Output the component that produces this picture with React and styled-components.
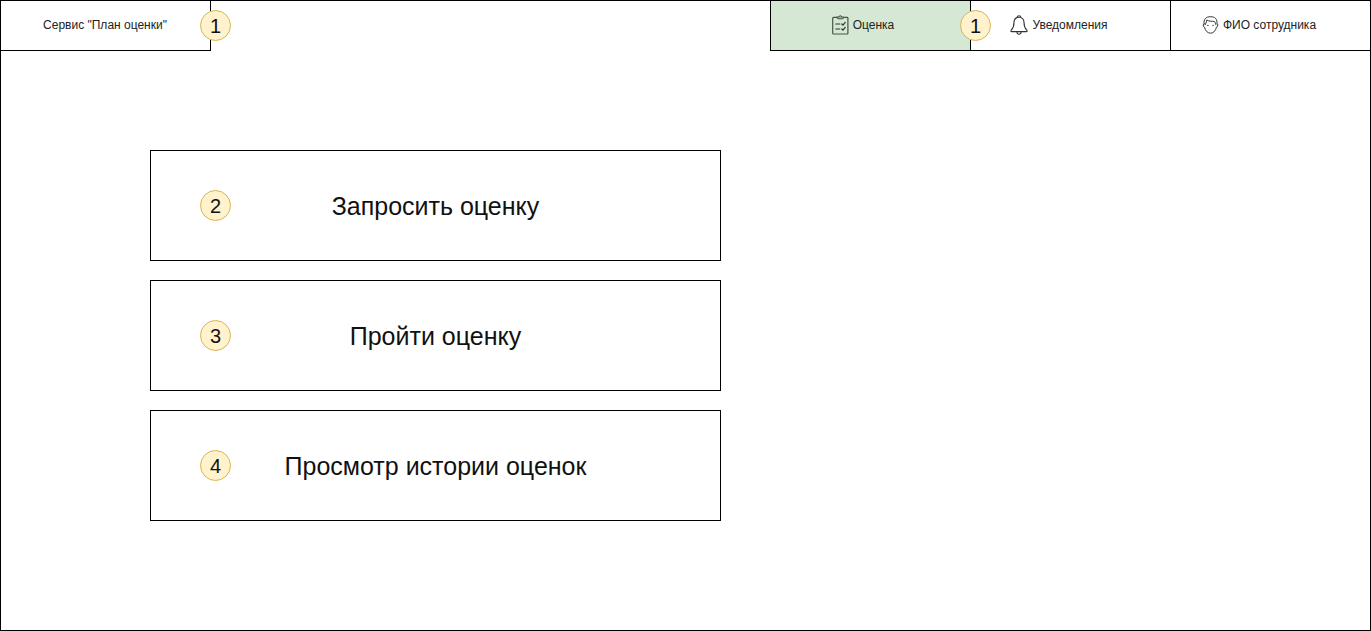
import React from "react";
import styled, { createGlobalStyle } from "styled-components";

const GlobalStyle = createGlobalStyle`
  *, *::before, *::after { box-sizing: border-box; }
  body {
    margin: 0;
    background: #ffffff;
    color: #111111;
    font-family: "Liberation Sans", Arial, Helvetica, sans-serif;
    font-size: 12px;
    line-height: 16px;
  }
`;

const Page = styled.div`
  min-height: 100vh;
  border: 1px solid #000000;
`;

const Header = styled.header`
  display: flex;
  justify-content: space-between;
`;

const Cell = styled.div`
  position: relative;
  display: flex;
  height: 50px;
  border-bottom: 1px solid #000000;
`;

const BrandCell = styled(Cell)`
  width: 210px;
  border-right: 1px solid #000000;
`;

const TabCell = styled(Cell)`
  width: 200px;
  border-left: 1px solid #000000;
  background: ${(p) => (p.$active ? "#d5e8d4" : "#ffffff")};
`;

const CellLink = styled.a`
  flex: 1;
  display: flex;
  align-items: center;
  justify-content: center;
  gap: 4px;
  padding-right: ${(p) => p.$inset}px;
  padding-bottom: 2px;
  color: #222222;
  text-decoration: none;
  white-space: nowrap;
`;

const Nav = styled.nav`
  display: flex;
`;

const Badge = styled.span`
  display: flex;
  align-items: center;
  justify-content: center;
  flex: none;
  width: 31px;
  height: 31px;
  border: 1px solid #d6b656;
  border-radius: 50%;
  background: #fff2cc;
  font-size: 20px;
  line-height: 24px;
`;

const EdgeBadge = styled(Badge)`
  position: absolute;
  z-index: 1;
  top: 9px;
  right: -21px;
`;

const Main = styled.main`
  padding: 99px 149px;
`;

const CardList = styled.div`
  display: flex;
  flex-direction: column;
  gap: 19px;
  max-width: 571px;
`;

const Card = styled.button`
  display: grid;
  grid-template-columns: 31px 1fr 31px;
  align-items: center;
  width: 100%;
  padding: 39px 49px;
  border: 1px solid #000000;
  background: #ffffff;
  color: inherit;
  font-family: inherit;
  cursor: pointer;
`;

const CardLabel = styled.span`
  font-size: 25px;
  line-height: 30px;
  text-align: center;
`;

const Icon = styled.svg`
  flex: none;
  display: block;
  fill: none;
  stroke: #333333;
  stroke-linecap: round;
  stroke-linejoin: round;
`;

const ClipboardIcon = () => (
  <Icon width="17" height="20" viewBox="0 0 17 20" aria-hidden="true">
    <path strokeWidth="1.2" stroke="#4a524a" d="M5 2.4H1.5Q.7 2.4 .7 3.2V18.2Q.7 19 1.5 19H15.1Q15.9 19 15.9 18.2V3.2Q15.9 2.4 15.1 2.4H11.6" />
    <path fill="#a3afa2" stroke="#4a524a" d="M5 2H6.9Q7 .7 8.3 .7T9.7 2H11.6V2.6Q11.6 3.8 10.4 3.8H6.2Q5 3.8 5 2.6Z" />
    <path strokeWidth="1.2" d="M3.8 9H7.8M3.8 14H7.8M9.8 9L11 10.2L13.2 7.4M9.8 14L11 15.2L13.2 12.4" />
  </Icon>
);

const BellIcon = () => (
  <Icon width="18" height="20" viewBox="0 0 18 20" aria-hidden="true">
    <path strokeWidth="1.1" d="M7.3 2.5V2Q7.3 .7 9 .7T10.7 2V2.5" />
    <path strokeWidth="1.1" d="M9 2.3C5.6 2.3 4 4.6 4 7.6C4 11.6 3 13.4 1.2 15.2Q.3 16.6 1.7 16.6H16.3Q17.7 16.6 16.8 15.2C15 13.4 14 11.6 14 7.6C14 4.6 12.4 2.3 9 2.3Z" />
    <path strokeWidth="1.1" d="M6.8 16.8Q7 19.3 9 19.3T11.2 16.8" />
  </Icon>
);

const FaceIcon = () => (
  <Icon width="17" height="18" viewBox="0 0 17 18" aria-hidden="true">
    <path d="M2.1 7.8C1.4 3.3 3.9 .7 8.5 .7S15.6 3.3 14.9 7.8C16.2 7.6 16.2 10.8 14.4 11.3C13.8 14.4 11.6 17.2 8.5 17.2S3.2 14.4 2.6 11.3C.8 10.8 .8 7.6 2.1 7.8" />
    <path d="M3.2 8.6C3.6 7.7 4.4 6.8 4.8 4C7 5.6 10.5 5.1 12.3 5.5C13.4 5.9 13.1 7.3 13.8 8.6" />
    <path strokeWidth="1.3" d="M5.9 9.4H6M11 9.4H11.1" />
  </Icon>
);

const tabs = [
  { label: "Оценка", icon: ClipboardIcon, active: true, badge: 1, inset: 15 },
  { label: "Уведомления", icon: BellIcon, inset: 23 },
  { label: "ФИО сотрудника", icon: FaceIcon, inset: 23 },
];

const actions = [
  { number: 2, label: "Запросить оценку" },
  { number: 3, label: "Пройти оценку" },
  { number: 4, label: "Просмотр истории оценок" },
];

export default function App() {
  return (
    <>
      <GlobalStyle />
      <Page>
        <Header>
          <BrandCell>
            <CellLink href="#home" $inset={1}>
              Сервис "План оценки"
            </CellLink>
            <EdgeBadge>1</EdgeBadge>
          </BrandCell>
          <Nav>
            {tabs.map(({ label, icon: TabIcon, active, badge, inset }) => (
              <TabCell key={label} $active={active}>
                <CellLink
                  href="#tab"
                  $inset={inset}
                  aria-current={active ? "page" : undefined}
                >
                  <TabIcon />
                  {label}
                </CellLink>
                {badge && <EdgeBadge>{badge}</EdgeBadge>}
              </TabCell>
            ))}
          </Nav>
        </Header>
        <Main>
          <CardList>
            {actions.map(({ number, label }) => (
              <Card key={number} type="button">
                <Badge>{number}</Badge>
                <CardLabel>{label}</CardLabel>
              </Card>
            ))}
          </CardList>
        </Main>
      </Page>
    </>
  );
}
